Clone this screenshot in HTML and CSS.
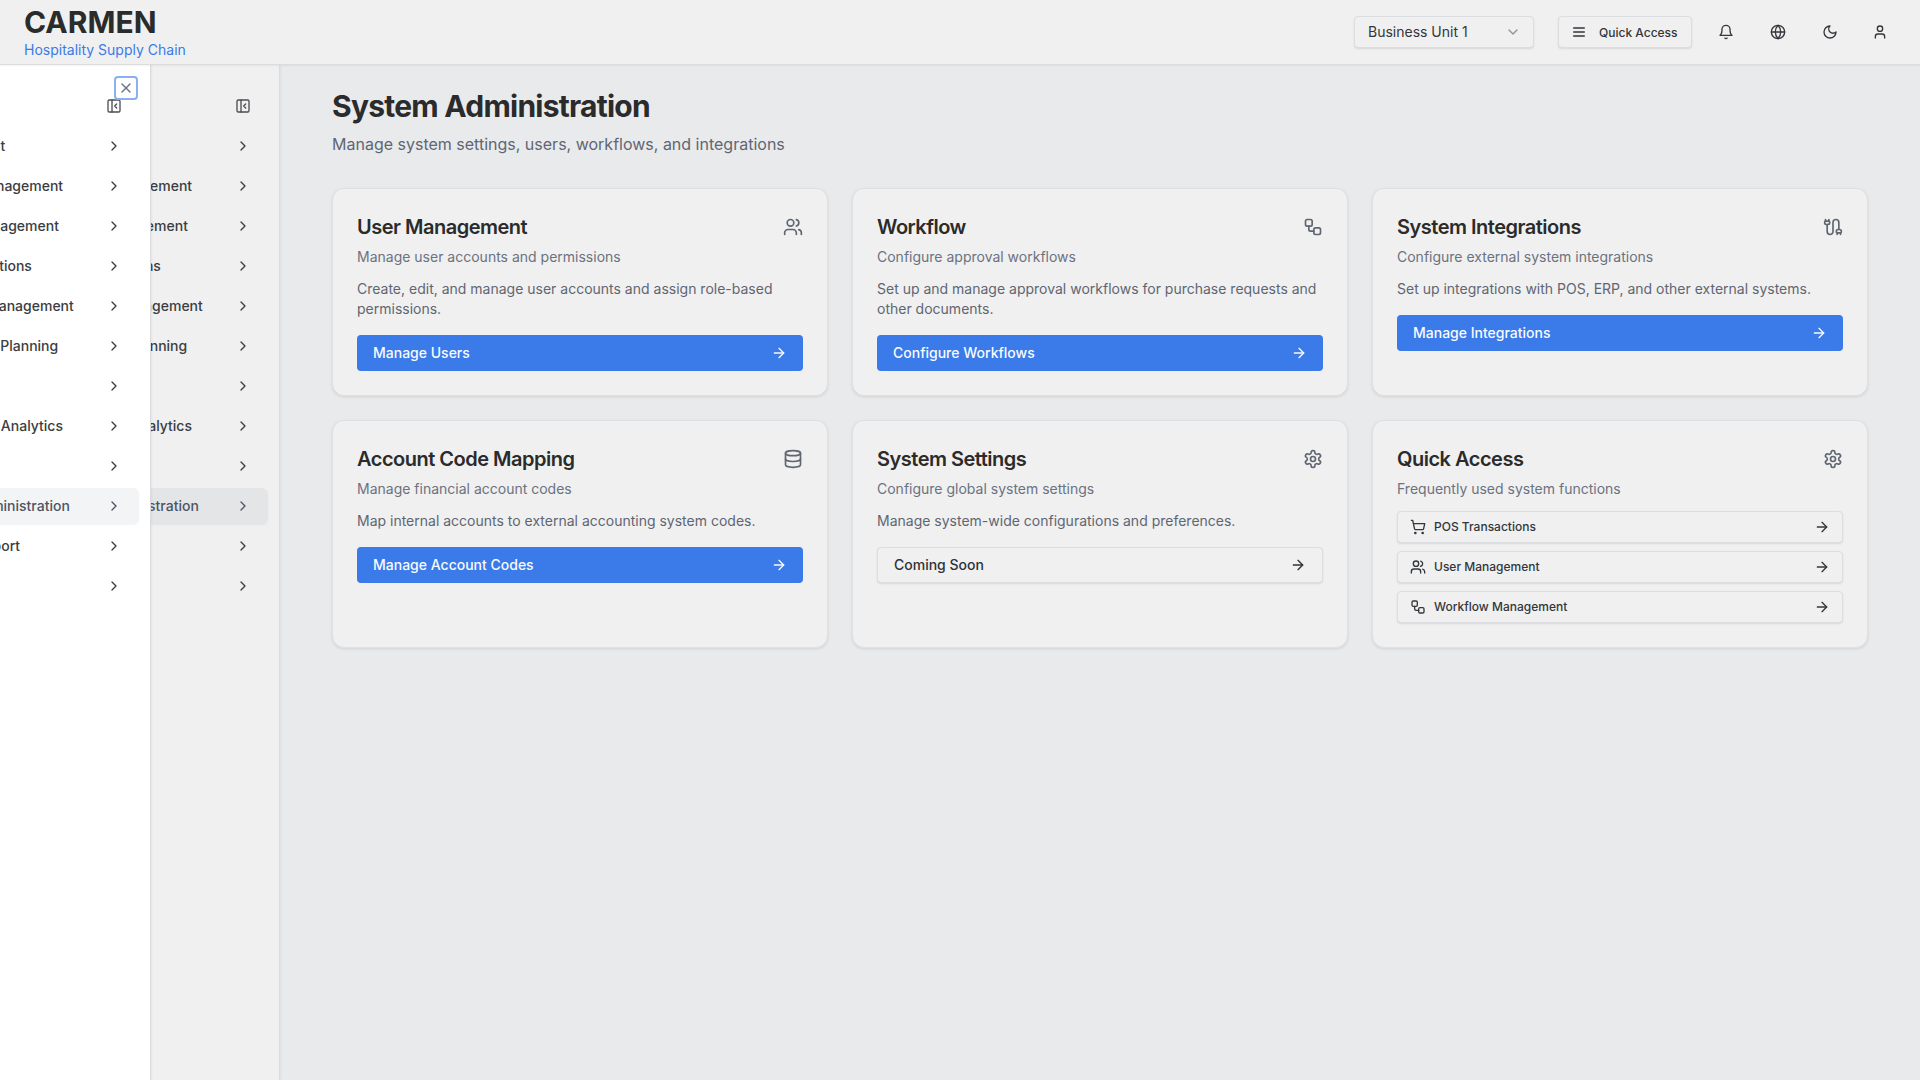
FILE: index.html
```html
<!DOCTYPE html>
<html lang="en">
<head>
    <meta charset="UTF-8">
    <meta name="viewport" content="width=device-width, initial-scale=1.0">
    <title>Carmen - System Administration</title>
    <link rel="stylesheet" href="styles.css">
</head>
<body>
    <!-- Icon set -->
    <svg class="sprite" xmlns="http://www.w3.org/2000/svg">
        <symbol id="i-users" viewBox="0 0 24 24"><path d="M16 21v-2a4 4 0 0 0-4-4H6a4 4 0 0 0-4 4v2"/><circle cx="9" cy="7" r="4"/><path d="M22 21v-2a4 4 0 0 0-3-3.87"/><path d="M16 3.13a4 4 0 0 1 0 7.75"/></symbol>
        <symbol id="i-workflow" viewBox="0 0 24 24"><rect width="8" height="8" x="3" y="3" rx="2"/><path d="M7 11v4a2 2 0 0 0 2 2h4"/><rect width="8" height="8" x="13" y="13" rx="2"/></symbol>
        <symbol id="i-cable" viewBox="0 0 24 24"><path d="M17 21v-2a1 1 0 0 1-1-1v-1a2 2 0 0 1 2-2h2a2 2 0 0 1 2 2v1a1 1 0 0 1-1 1"/><path d="M19 15V6.5a1 1 0 0 0-7 0v11a1 1 0 0 1-7 0V9"/><path d="M21 21v-2h-4"/><path d="M3 5h4V3"/><path d="M7 5a1 1 0 0 1 1 1v1a2 2 0 0 1-2 2H4a2 2 0 0 1-2-2V6a1 1 0 0 1 1-1V3"/></symbol>
        <symbol id="i-database" viewBox="0 0 24 24"><ellipse cx="12" cy="5" rx="9" ry="3"/><path d="M3 5V19A9 3 0 0 0 21 19V5"/><path d="M3 12A9 3 0 0 0 21 12"/></symbol>
        <symbol id="i-settings" viewBox="0 0 24 24"><path d="M12.22 2h-.44a2 2 0 0 0-2 2v.18a2 2 0 0 1-1 1.73l-.43.25a2 2 0 0 1-2 0l-.15-.08a2 2 0 0 0-2.73.73l-.22.38a2 2 0 0 0 .73 2.73l.15.1a2 2 0 0 1 1 1.72v.51a2 2 0 0 1-1 1.74l-.15.09a2 2 0 0 0-.73 2.73l.22.38a2 2 0 0 0 2.73.73l.15-.08a2 2 0 0 1 2 0l.43.25a2 2 0 0 1 1 1.73V20a2 2 0 0 0 2 2h.44a2 2 0 0 0 2-2v-.18a2 2 0 0 1 1-1.73l.43-.25a2 2 0 0 1 2 0l.15.08a2 2 0 0 0 2.73-.73l.22-.39a2 2 0 0 0-.73-2.73l-.15-.08a2 2 0 0 1-1-1.74v-.5a2 2 0 0 1 1-1.74l.15-.09a2 2 0 0 0 .73-2.73l-.22-.38a2 2 0 0 0-2.73-.73l-.15.08a2 2 0 0 1-2 0l-.43-.25a2 2 0 0 1-1-1.73V4a2 2 0 0 0-2-2z"/><circle cx="12" cy="12" r="3"/></symbol>
        <symbol id="i-arrow" viewBox="0 0 24 24"><path d="M5 12h14"/><path d="m12 5 7 7-7 7"/></symbol>
        <symbol id="i-chevron" viewBox="0 0 24 24"><path d="m9 18 6-6-6-6"/></symbol>
        <symbol id="i-down" viewBox="0 0 24 24"><path d="m6 9 6 6 6-6"/></symbol>
        <symbol id="i-cart" viewBox="0 0 24 24"><circle cx="8" cy="21" r="1"/><circle cx="19" cy="21" r="1"/><path d="M2.05 2.05h2l2.66 12.42a2 2 0 0 0 2 1.58h9.78a2 2 0 0 0 1.95-1.57l1.65-7.43H5.12"/></symbol>
        <symbol id="i-bell" viewBox="0 0 24 24"><path d="M6 8a6 6 0 0 1 12 0c0 7 3 9 3 9H3s3-2 3-9"/><path d="M10.3 21a1.94 1.94 0 0 0 3.4 0"/></symbol>
        <symbol id="i-globe" viewBox="0 0 24 24"><circle cx="12" cy="12" r="10"/><path d="M12 2a14.5 14.5 0 0 0 0 20 14.5 14.5 0 0 0 0-20"/><path d="M2 12h20"/></symbol>
        <symbol id="i-moon" viewBox="0 0 24 24"><path d="M12 3a6 6 0 0 0 9 9 9 9 0 1 1-9-9Z"/></symbol>
        <symbol id="i-user" viewBox="0 0 24 24"><path d="M19 21v-2a4 4 0 0 0-4-4H9a4 4 0 0 0-4 4v2"/><circle cx="12" cy="7" r="4"/></symbol>
        <symbol id="i-menu" viewBox="0 0 24 24"><path d="M4 6h16"/><path d="M4 12h16"/><path d="M4 18h16"/></symbol>
        <symbol id="i-panel" viewBox="0 0 24 24"><rect width="18" height="18" x="3" y="3" rx="2"/><path d="M9 3v18"/><path d="m16 15-3-3 3-3"/></symbol>
        <symbol id="i-close" viewBox="0 0 24 24"><path d="M18 6 6 18"/><path d="m6 6 12 12"/></symbol>
    </svg>

    <!-- Top bar -->
    <header class="topbar">
        <div class="brand">
            <div class="brand-name">CARMEN</div>
            <div class="brand-sub">Hospitality Supply Chain</div>
        </div>
        <div class="topbar-actions">
            <div class="unit-select">
                <span>Business Unit 1</span>
                <svg class="icon icon-16 faded"><use href="#i-down"/></svg>
            </div>
            <button class="quick-btn">
                <svg class="icon icon-16"><use href="#i-menu"/></svg>
                <span>Quick Access</span>
            </button>
            <div class="topbar-icons">
                <svg class="icon icon-16"><use href="#i-bell"/></svg>
                <svg class="icon icon-16"><use href="#i-globe"/></svg>
                <svg class="icon icon-16"><use href="#i-moon"/></svg>
                <svg class="icon icon-16 user-icon"><use href="#i-user"/></svg>
            </div>
        </div>
    </header>

    <div class="shell">
        <!-- Sidebar -->
        <nav class="sidebar">
            <div class="nav-toggle"><svg class="icon icon-16"><use href="#i-panel"/></svg></div>
            <a class="nav-item"><span>Procurement</span><svg class="icon icon-16"><use href="#i-chevron"/></svg></a>
            <a class="nav-item"><span>Product Management</span><svg class="icon icon-16"><use href="#i-chevron"/></svg></a>
            <a class="nav-item"><span>Vendor Management</span><svg class="icon icon-16"><use href="#i-chevron"/></svg></a>
            <a class="nav-item"><span>Store Operations</span><svg class="icon icon-16"><use href="#i-chevron"/></svg></a>
            <a class="nav-item"><span>Inventory Management</span><svg class="icon icon-16"><use href="#i-chevron"/></svg></a>
            <a class="nav-item"><span>Operational Planning</span><svg class="icon icon-16"><use href="#i-chevron"/></svg></a>
            <a class="nav-item"><span>Production</span><svg class="icon icon-16"><use href="#i-chevron"/></svg></a>
            <a class="nav-item"><span>Reporting &amp; Analytics</span><svg class="icon icon-16"><use href="#i-chevron"/></svg></a>
            <a class="nav-item"><span>Finance</span><svg class="icon icon-16"><use href="#i-chevron"/></svg></a>
            <a class="nav-item active"><span>System Administration</span><svg class="icon icon-16"><use href="#i-chevron"/></svg></a>
            <a class="nav-item"><span>Help &amp; Support</span><svg class="icon icon-16"><use href="#i-chevron"/></svg></a>
            <a class="nav-item"><span>Settings</span><svg class="icon icon-16"><use href="#i-chevron"/></svg></a>
        </nav>

        <!-- Mobile drawer, caught halfway through its slide -->
        <nav class="sidebar drawer">
            <button class="drawer-close"><svg class="icon icon-16"><use href="#i-close"/></svg></button>
            <div class="nav-toggle"><svg class="icon icon-16"><use href="#i-panel"/></svg></div>
            <a class="nav-item"><span>Procurement</span><svg class="icon icon-16"><use href="#i-chevron"/></svg></a>
            <a class="nav-item"><span>Product Management</span><svg class="icon icon-16"><use href="#i-chevron"/></svg></a>
            <a class="nav-item"><span>Vendor Management</span><svg class="icon icon-16"><use href="#i-chevron"/></svg></a>
            <a class="nav-item"><span>Store Operations</span><svg class="icon icon-16"><use href="#i-chevron"/></svg></a>
            <a class="nav-item"><span>Inventory Management</span><svg class="icon icon-16"><use href="#i-chevron"/></svg></a>
            <a class="nav-item"><span>Operational Planning</span><svg class="icon icon-16"><use href="#i-chevron"/></svg></a>
            <a class="nav-item"><span>Production</span><svg class="icon icon-16"><use href="#i-chevron"/></svg></a>
            <a class="nav-item"><span>Reporting &amp; Analytics</span><svg class="icon icon-16"><use href="#i-chevron"/></svg></a>
            <a class="nav-item"><span>Finance</span><svg class="icon icon-16"><use href="#i-chevron"/></svg></a>
            <a class="nav-item active"><span>System Administration</span><svg class="icon icon-16"><use href="#i-chevron"/></svg></a>
            <a class="nav-item"><span>Help &amp; Support</span><svg class="icon icon-16"><use href="#i-chevron"/></svg></a>
            <a class="nav-item"><span>Settings</span><svg class="icon icon-16"><use href="#i-chevron"/></svg></a>
        </nav>

        <!-- Main content -->
        <main class="content">
            <h1 class="page-title">System Administration</h1>
            <p class="page-sub">Manage system settings, users, workflows, and integrations</p>

            <div class="card-grid">
                <section class="card">
                    <div class="card-head">
                        <h2>User Management</h2>
                        <svg class="icon icon-20"><use href="#i-users"/></svg>
                    </div>
                    <p class="card-desc">Manage user accounts and permissions</p>
                    <p class="card-text">Create, edit, and manage user accounts and assign role-based permissions.</p>
                    <a class="btn btn-primary"><span>Manage Users</span><svg class="icon icon-16"><use href="#i-arrow"/></svg></a>
                </section>

                <section class="card">
                    <div class="card-head">
                        <h2>Workflow</h2>
                        <svg class="icon icon-20"><use href="#i-workflow"/></svg>
                    </div>
                    <p class="card-desc">Configure approval workflows</p>
                    <p class="card-text">Set up and manage approval workflows for purchase requests and other documents.</p>
                    <a class="btn btn-primary"><span>Configure Workflows</span><svg class="icon icon-16"><use href="#i-arrow"/></svg></a>
                </section>

                <section class="card">
                    <div class="card-head">
                        <h2>System Integrations</h2>
                        <svg class="icon icon-20"><use href="#i-cable"/></svg>
                    </div>
                    <p class="card-desc">Configure external system integrations</p>
                    <p class="card-text">Set up integrations with POS, ERP, and other external systems.</p>
                    <a class="btn btn-primary"><span>Manage Integrations</span><svg class="icon icon-16"><use href="#i-arrow"/></svg></a>
                </section>

                <section class="card">
                    <div class="card-head">
                        <h2>Account Code Mapping</h2>
                        <svg class="icon icon-20"><use href="#i-database"/></svg>
                    </div>
                    <p class="card-desc">Manage financial account codes</p>
                    <p class="card-text">Map internal accounts to external accounting system codes.</p>
                    <a class="btn btn-primary"><span>Manage Account Codes</span><svg class="icon icon-16"><use href="#i-arrow"/></svg></a>
                </section>

                <section class="card">
                    <div class="card-head">
                        <h2>System Settings</h2>
                        <svg class="icon icon-20"><use href="#i-settings"/></svg>
                    </div>
                    <p class="card-desc">Configure global system settings</p>
                    <p class="card-text">Manage system-wide configurations and preferences.</p>
                    <a class="btn btn-outline"><span>Coming Soon</span><svg class="icon icon-16"><use href="#i-arrow"/></svg></a>
                </section>

                <section class="card">
                    <div class="card-head">
                        <h2>Quick Access</h2>
                        <svg class="icon icon-20"><use href="#i-settings"/></svg>
                    </div>
                    <p class="card-desc">Frequently used system functions</p>
                    <div class="quick-list">
                        <a class="quick-row">
                            <svg class="icon icon-16"><use href="#i-cart"/></svg>
                            <span>POS Transactions</span>
                            <svg class="icon icon-16 push"><use href="#i-arrow"/></svg>
                        </a>
                        <a class="quick-row">
                            <svg class="icon icon-16"><use href="#i-users"/></svg>
                            <span>User Management</span>
                            <svg class="icon icon-16 push"><use href="#i-arrow"/></svg>
                        </a>
                        <a class="quick-row">
                            <svg class="icon icon-16"><use href="#i-workflow"/></svg>
                            <span>Workflow Management</span>
                            <svg class="icon icon-16 push"><use href="#i-arrow"/></svg>
                        </a>
                    </div>
                </section>
            </div>
        </main>
    </div>
</body>
</html>
```

FILE: styles.css
```css
* {
    box-sizing: border-box;
}
html, body {
    height: 100%;
}
body {
    margin: 0;
    display: flex;
    flex-direction: column;
    overflow: hidden;
    background-color: #e9eaec;
    color: #292929;
    font-family: Inter, "Liberation Sans", sans-serif;
    font-size: 14px;
    line-height: 20px;
}
.sprite {
    display: none;
}
.icon {
    flex: none;
    display: block;
    fill: none;
    stroke: currentColor;
    stroke-width: 2;
    stroke-linecap: round;
    stroke-linejoin: round;
}
.icon-16 {
    width: 16px;
    height: 16px;
}
.icon-20 {
    width: 20px;
    height: 20px;
    stroke-width: 2;
    color: #5f6672;
}
.faded {
    opacity: 0.5;
}
.push {
    margin-left: auto;
}

/* Top bar */
.topbar {
    flex: none;
    height: 65px;
    display: flex;
    align-items: center;
    justify-content: space-between;
    padding: 0 24px;
    background-color: #f0f0f0;
    border-bottom: 1px solid #dcdcde;
    box-shadow: 0 1px 2px rgba(0, 0, 0, 0.05);
    position: relative;
    z-index: 3;
}
.brand-name {
    font-size: 30px;
    line-height: 36px;
    font-weight: 700;
    color: #2b2b2b;
}
.brand-sub {
    font-size: 14px;
    line-height: 20px;
    color: #3b7ae8;
}
.topbar-actions {
    display: flex;
    align-items: center;
}
.unit-select {
    width: 180px;
    height: 32px;
    display: flex;
    align-items: center;
    justify-content: space-between;
    padding: 0 12px 0 13px;
    margin-right: 24px;
    background-color: #f0f0f0;
    border: 1px solid #dcdde0;
    border-radius: 4px;
    box-shadow: 0 1px 2px rgba(0, 0, 0, 0.1);
    color: #33363b;
}
.quick-btn {
    width: 134px;
    height: 32px;
    display: flex;
    align-items: center;
    gap: 12px;
    padding: 0 12px;
    margin-right: 26px;
    background-color: #f0f0f0;
    border: 1px solid #dcdde0;
    border-radius: 4px;
    box-shadow: 0 1px 2px rgba(0, 0, 0, 0.1);
    color: #33363b;
    font-family: inherit;
    font-size: 12px;
    font-weight: 500;
}
.topbar-icons {
    display: flex;
    gap: 36px;
    color: #33363b;
    margin-right: 8px;
}
.user-icon {
    margin-left: -2px;
}

/* Sidebar */
.shell {
    flex: 1;
    display: flex;
    min-height: 0;
    position: relative;
}
.sidebar {
    flex: none;
    width: 280px;
    display: flex;
    flex-direction: column;
    gap: 4px;
    padding: 23px 11px 0 12px;
    background-color: #f0f0f0;
    border-right: 1px solid #dcdcde;
    box-shadow: 1px 0 2px rgba(0, 0, 0, 0.05);
    color: #3a3d42;
    font-weight: 500;
}
.drawer {
    position: absolute;
    top: 0;
    bottom: 0;
    left: 0;
    z-index: 2;
    transform: translateX(-129px);
    background-color: #ffffff;
}
.drawer .nav-item.active {
    background-color: #f3f4f6;
}
.drawer-close {
    position: absolute;
    top: 11px;
    right: 12px;
    width: 24px;
    height: 24px;
    display: flex;
    align-items: center;
    justify-content: center;
    padding: 0;
    background: none;
    border: 2px solid #8ab0f3;
    border-radius: 4px;
    color: #6b7280;
}
.nav-toggle {
    height: 36px;
    display: flex;
    align-items: center;
    justify-content: flex-end;
    padding-right: 17px;
    color: #4b4e54;
}
.nav-item {
    height: 36px;
    display: flex;
    align-items: center;
    justify-content: space-between;
    padding: 0 17px 0 36px;
    border-radius: 6px;
    white-space: nowrap;
}
.nav-item.active {
    background-color: #e4e5e7;
    box-shadow: 0 1px 2px rgba(0, 0, 0, 0.05);
    color: #4b5563;
}

/* Page content */
.content {
    flex: 1;
    min-width: 0;
    padding: 23px 52px 0 52px;
}
.page-title {
    margin: 0;
    font-size: 30px;
    line-height: 36px;
    font-weight: 700;
    letter-spacing: -0.75px;
    color: #2b2b2b;
}
.page-sub {
    margin: 8px 0 32px 0;
    font-size: 16px;
    line-height: 24px;
    color: #5f6672;
}
.card-grid {
    display: grid;
    grid-template-columns: repeat(3, 1fr);
    gap: 24px;
}
.card {
    display: flex;
    flex-direction: column;
    padding: 24px;
    background-color: #f0f0f0;
    border: 1px solid #dfe0e2;
    border-radius: 12px;
    box-shadow: 0 1px 3px rgba(0, 0, 0, 0.1);
}
.card-head {
    display: flex;
    align-items: center;
    justify-content: space-between;
}
.card-head h2 {
    margin: 0;
    font-size: 20px;
    line-height: 28px;
    font-weight: 600;
    letter-spacing: -0.5px;
    color: #2b2b2b;
}
.card-desc {
    margin: 6px 0 0 0;
    color: #6b7280;
}
.card-text {
    margin: 12px 0 16px 0;
    color: #5f6672;
}
.btn {
    height: 36px;
    display: flex;
    align-items: center;
    justify-content: space-between;
    padding: 0 16px;
    border-radius: 4px;
    font-weight: 500;
}
.btn-primary {
    background-color: #3a7ae9;
    color: #f8fafc;
}
.btn-outline {
    background-color: #f0f0f0;
    border: 1px solid #dcdde0;
    box-shadow: 0 1px 2px rgba(0, 0, 0, 0.1);
    color: #2f3237;
}
.quick-list {
    margin-top: 12px;
    display: flex;
    flex-direction: column;
    gap: 8px;
}
.quick-row {
    height: 32px;
    display: flex;
    align-items: center;
    gap: 8px;
    padding: 0 12px;
    background-color: #f0f0f0;
    border: 1px solid #dcdde0;
    border-radius: 4px;
    box-shadow: 0 1px 2px rgba(0, 0, 0, 0.1);
    font-size: 12px;
    font-weight: 500;
    color: #33363b;
}
```
